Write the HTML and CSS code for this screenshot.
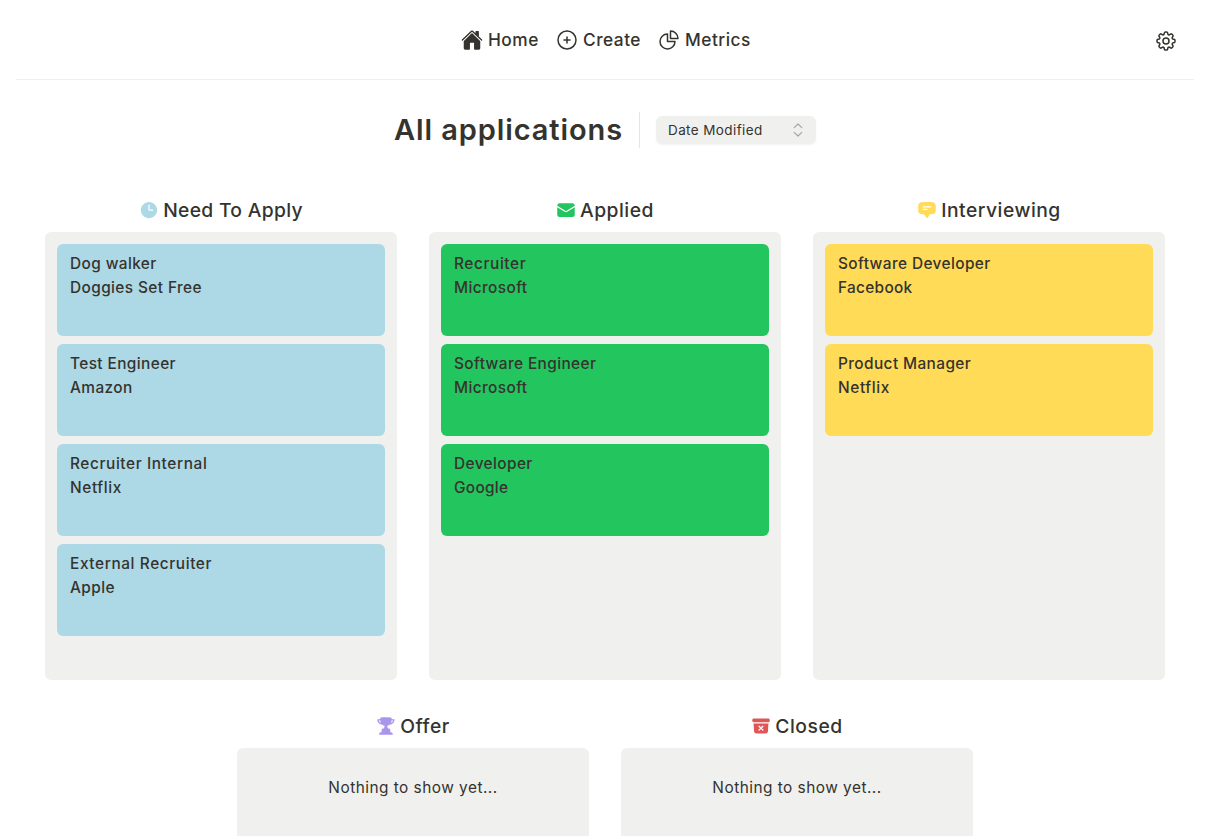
FILE: index.html
```html
<!DOCTYPE html>
<html lang="en">
<head>
<meta charset="utf-8">
<title>All applications</title>
<link rel="stylesheet" href="styles.css">
</head>
<body>
<header class="header">
  <nav class="nav">
    <a class="nav-link home"><svg class="home-icon" viewBox="0 0 512 512" fill="currentColor"><path d="M261.56 101.28a8 8 0 00-11.06 0L66.4 277.15a8 8 0 00-2.47 5.79L63.9 448a32 32 0 0032 32H192a16 16 0 0016-16V328a8 8 0 018-8h80a8 8 0 018 8v136a16 16 0 0016 16h96.06a32 32 0 0032-32V282.94a8 8 0 00-2.47-5.79z"/><path d="M490.91 244.15l-74.8-71.56V64a16 16 0 00-16-16h-48a16 16 0 00-16 16v32l-57.92-55.38C272.77 35.14 264.71 32 256 32c-8.68 0-16.72 3.14-22.14 8.63l-212.7 203.5c-6.22 6-7 15.87-1.34 22.37A16 16 0 0043 267.56L250.5 69.28a8 8 0 0111.06 0l207.52 198.28a16 16 0 0022.59-.44c6.14-6.36 5.63-16.86-.76-22.97z"/></svg><span>Home</span></a>
    <a class="nav-link create"><svg class="line-icon" viewBox="0 0 24 24"><path d="M12 9v6m3-3H9m12 0a9 9 0 11-18 0 9 9 0 0118 0z"/></svg><span>Create</span></a>
    <a class="nav-link metrics"><svg class="line-icon" viewBox="0 0 24 24"><path d="M10.5 6a7.5 7.5 0 107.5 7.5h-7.5V6z"/><path d="M13.5 10.5H21A7.5 7.5 0 0013.5 3v7.5z"/></svg><span>Metrics</span></a>
  </nav>
  <svg class="line-icon settings" viewBox="0 0 24 24"><path d="M10.343 3.94c.09-.542.56-.94 1.11-.94h1.093c.55 0 1.02.398 1.11.94l.149.894c.07.424.384.764.78.93.398.164.855.142 1.205-.108l.737-.527a1.125 1.125 0 011.45.12l.773.774c.39.389.44 1.002.12 1.45l-.527.737c-.25.35-.272.806-.107 1.204.165.397.505.71.93.78l.893.15c.543.09.94.56.94 1.109v1.094c0 .55-.397 1.02-.94 1.11l-.893.149c-.425.07-.765.383-.93.78-.165.398-.143.854.107 1.204l.527.738c.32.447.269 1.06-.12 1.45l-.774.773a1.125 1.125 0 01-1.449.12l-.738-.527c-.35-.25-.806-.272-1.203-.107-.397.165-.71.505-.781.929l-.149.894c-.09.542-.56.94-1.11.94h-1.094c-.55 0-1.019-.398-1.11-.94l-.148-.894c-.071-.424-.384-.764-.781-.93-.398-.164-.854-.142-1.204.108l-.738.527c-.447.32-1.06.269-1.45-.12l-.773-.774a1.125 1.125 0 01-.12-1.45l.527-.737c.25-.35.273-.806.108-1.204-.165-.397-.505-.71-.93-.78l-.894-.15c-.542-.09-.94-.56-.94-1.109v-1.094c0-.55.398-1.02.94-1.11l.894-.149c.424-.07.765-.383.93-.78.165-.398.143-.854-.107-1.204l-.527-.738a1.125 1.125 0 01.12-1.45l.773-.773a1.125 1.125 0 011.45-.12l.737.527c.35.25.807.272 1.204.107.397-.165.71-.505.78-.929l.15-.894z"/><path d="M15 12a3 3 0 11-6 0 3 3 0 016 0z"/></svg>
</header>
<main>
  <div class="toolbar">
    <h1 class="title">All applications</h1>
    <div class="sort"><button class="select"><span>Date Modified</span><svg class="chevrons" viewBox="0 0 20 20"><path d="M6.2 7.6L10 4l3.8 3.6M6.2 12.4L10 16l3.8-3.6"/></svg></button></div>
  </div>
  <div class="board">
    <section class="column">
      <h2 class="heading need"><svg class="icon" viewBox="0 0 24 24"><path fill-rule="evenodd" d="M12 2.25c-5.385 0-9.75 4.365-9.75 9.75s4.365 9.75 9.75 9.75 9.75-4.365 9.75-9.75S17.385 2.25 12 2.25zM12.75 6a.75.75 0 00-1.5 0v6c0 .414.336.75.75.75h4.5a.75.75 0 000-1.5h-3.75V6z"/></svg><span>Need To Apply</span></h2>
      <div class="list blue">
        <article class="card"><p>Dog walker</p><p>Doggies Set Free</p></article>
        <article class="card"><p>Test Engineer</p><p>Amazon</p></article>
        <article class="card"><p class="wide">Recruiter Internal</p><p class="wide">Netflix</p></article>
        <article class="card"><p class="wide">External Recruiter</p><p>Apple</p></article>
      </div>
    </section>
    <section class="column">
      <h2 class="heading applied"><svg class="icon" viewBox="0 0 24 24"><path d="M1.5 8.67v8.58a3 3 0 003 3h15a3 3 0 003-3V8.67l-8.928 5.493a3 3 0 01-3.144 0L1.5 8.67z"/><path d="M22.5 6.908V6.75a3 3 0 00-3-3h-15a3 3 0 00-3 3v.158l9.714 5.978a1.5 1.5 0 001.572 0L22.5 6.908z"/></svg><span>Applied</span></h2>
      <div class="list green">
        <article class="card"><p class="wide">Recruiter</p><p>Microsoft</p></article>
        <article class="card"><p>Software Engineer</p><p>Microsoft</p></article>
        <article class="card"><p>Developer</p><p class="tight">Google</p></article>
      </div>
    </section>
    <section class="column">
      <h2 class="heading interviewing"><svg class="icon" viewBox="0 0 24 24"><path fill-rule="evenodd" d="M4.848 2.771A49.144 49.144 0 0112 2.25c2.43 0 4.817.178 7.152.52 1.978.292 3.348 2.024 3.348 3.97v6.02c0 1.946-1.37 3.678-3.348 3.97a48.901 48.901 0 01-3.476.383.39.39 0 00-.297.17l-2.755 4.133a.75.75 0 01-1.248 0l-2.755-4.133a.39.39 0 00-.297-.17 48.9 48.9 0 01-3.476-.384c-1.978-.29-3.348-2.024-3.348-3.97V6.741c0-1.946 1.37-3.68 3.348-3.97zM6.75 8.25a.75.75 0 01.75-.75h9a.75.75 0 010 1.5h-9a.75.75 0 01-.75-.75zm.75 2.25a.75.75 0 000 1.5H12a.75.75 0 000-1.5H7.5z"/></svg><span>Interviewing</span></h2>
      <div class="list yellow">
        <article class="card"><p>Software Developer</p><p class="tight">Facebook</p></article>
        <article class="card"><p>Product Manager</p><p class="wide">Netflix</p></article>
      </div>
    </section>
    <section class="column">
      <h2 class="heading offer"><svg class="icon" viewBox="0 0 24 24"><path fill-rule="evenodd" d="M5.166 2.621v.858c-1.035.148-2.059.33-3.071.543a.75.75 0 00-.584.859 6.753 6.753 0 006.138 5.6 6.73 6.73 0 002.743 1.346A6.707 6.707 0 019.279 15H8.54c-1.036 0-1.875.84-1.875 1.875V19.5h-.75a2.25 2.25 0 00-2.25 2.25c0 .414.336.75.75.75h15a.75.75 0 00.75-.75 2.25 2.25 0 00-2.25-2.25h-.75v-2.625c0-1.036-.84-1.875-1.875-1.875h-.739a6.706 6.706 0 01-1.112-3.173 6.73 6.73 0 002.743-1.347 6.753 6.753 0 006.139-5.6.75.75 0 00-.585-.858 47.077 47.077 0 00-3.07-.543V2.62a.75.75 0 00-.658-.744 49.22 49.22 0 00-6.093-.377c-2.063 0-4.096.128-6.093.377a.75.75 0 00-.657.744zm0 2.629c0 1.196.312 2.32.857 3.294A5.266 5.266 0 013.16 5.337a45.6 45.6 0 012.006-.343v.256zm13.5 0v-.256c.674.1 1.343.214 2.006.343a5.265 5.265 0 01-2.863 3.207 6.72 6.72 0 00.857-3.294z"/></svg><span>Offer</span></h2>
      <div class="list"><p class="empty">Nothing to show yet...</p></div>
    </section>
    <section class="column">
      <h2 class="heading closed"><svg class="icon" viewBox="0 0 24 24"><path d="M3.375 3C2.339 3 1.5 3.84 1.5 4.875v.75c0 1.036.84 1.875 1.875 1.875h17.25c1.035 0 1.875-.84 1.875-1.875v-.75C22.5 3.839 21.66 3 20.625 3H3.375z"/><path fill-rule="evenodd" d="M3.087 9l.54 9.176A3 3 0 006.62 21h10.757a3 3 0 002.995-2.824L20.913 9H3.087zm6.133 2.845a.75.75 0 011.06 0l1.72 1.72 1.72-1.72a.75.75 0 111.06 1.06l-1.72 1.72 1.72 1.72a.75.75 0 11-1.06 1.06L12 15.685l-1.72 1.72a.75.75 0 11-1.06-1.06l1.72-1.72-1.72-1.72a.75.75 0 010-1.06z"/></svg><span>Closed</span></h2>
      <div class="list"><p class="empty">Nothing to show yet...</p></div>
    </section>
  </div>
</main>
</body>
</html>
```
FILE: styles.css
```css
* { box-sizing: border-box; margin: 0; padding: 0; }
html { overflow: hidden; }
body { height: 836px; overflow: hidden; background: #fff; color: #35332e; font-family: Inter, "Noto Sans", sans-serif; font-size: 15.4px; line-height: 24px; white-space: nowrap; }
.header { display: grid; grid-template-columns: 24px 1fr 24px; align-items: center; height: 80px; margin: 0 16px; padding-right: 16px; border-bottom: 1px solid #eeeeec; }
.nav { grid-column: 2; display: flex; padding-left: 421px; font-size: 17.3px; font-weight: 500; line-height: 28px; letter-spacing: .5px; }
.nav-link { display: flex; align-items: center; }
.home { width: 94px; }
.create { width: 102px; }
.home-icon { width: 22px; height: 22px; margin-right: 5px; }
.line-icon { width: 24px; height: 24px; margin-right: 4px; fill: none; stroke: currentColor; stroke-width: 1.5; stroke-linecap: round; stroke-linejoin: round; }
.settings { margin: 2px 0 0; }
.toolbar { display: flex; align-items: center; height: 36px; margin-top: 32px; padding-left: 394px; }
.title { width: 245px; font-size: 29px; font-weight: 600; line-height: 36px; letter-spacing: .9px; }
.sort { display: flex; align-items: center; height: 36px; padding-left: 16px; border-left: 1px solid #e5e5e3; }
.select { display: flex; align-items: center; justify-content: space-between; width: 160px; height: 28px; padding: 0 8px 0 12px; border: 0; border-radius: 6px; background: #f0f0ee; box-shadow: 0 1px 2px rgba(0,0,0,.05); color: inherit; font: 13.5px/20px Inter, "Noto Sans", sans-serif; letter-spacing: .4px; }
.chevrons { width: 20px; height: 20px; fill: none; stroke: #a3a5ac; stroke-width: 1.2; stroke-linecap: round; stroke-linejoin: round; }
.board { display: flex; flex-wrap: wrap; justify-content: center; gap: 32px; width: 1120px; margin: 48px auto 0; }
.column { width: 352px; }
.heading { display: flex; align-items: center; justify-content: center; gap: 4px; height: 28px; margin-bottom: 8px; font-size: 19.3px; font-weight: 500; line-height: 28px; letter-spacing: .5px; }
.icon { width: 20px; height: 20px; fill: var(--tone); }
.need { --tone: #add8e6; letter-spacing: .3px; }
.applied { --tone: #22c55e; }
.interviewing { --tone: #ffdb58; }
.offer { --tone: #a996eb; }
.closed { --tone: #de5656; }
.list { display: flex; flex-direction: column; gap: 8px; height: 448px; padding: 12px; border-radius: 6px; background: #f0f0ee; }
.card { height: 92px; padding: 8px 13px; border-radius: 6px; background: var(--card); font-weight: 500; letter-spacing: .4px; }
.card .wide { letter-spacing: .6px; }
.card .tight { letter-spacing: .3px; }
.blue { --card: #add8e6; }
.green { --card: #22c55e; }
.yellow { --card: #ffdb58; }
.empty { padding-top: 16px; text-align: center; letter-spacing: .48px; }
```
